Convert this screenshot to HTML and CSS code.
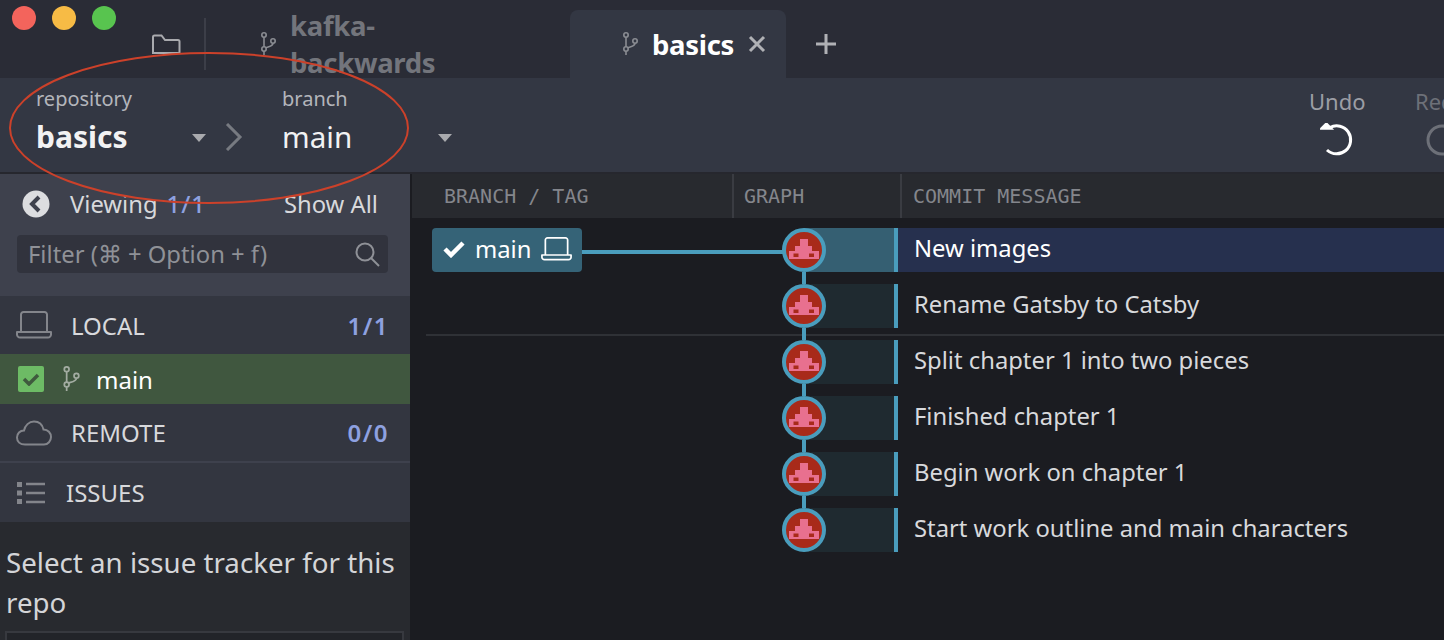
FILE: index.html
```html
<!DOCTYPE html>
<html lang="en">
<head>
  <meta charset="UTF-8">
  <meta name="viewport" content="width=device-width, initial-scale=1.0">
  <title>basics</title>
  <link rel="stylesheet" href="styles.css">
</head>
<body>
  <svg width="0" height="0" class="defs">
    <symbol id="fork" viewBox="0 0 16 24">
      <g fill="none" stroke="currentColor" stroke-width="1.6">
        <circle cx="4" cy="3" r="2.2"/>
        <circle cx="4" cy="17" r="2.2"/>
        <circle cx="13" cy="9" r="2.2"/>
        <path d="M4 5.2v9.6M4 19.2v3.8M13 11.2c0 3-5 3.6-7.6 4.6"/>
      </g>
    </symbol>
    <symbol id="laptop" viewBox="0 0 36 28">
      <g fill="none" stroke="currentColor" stroke-width="2" stroke-linejoin="round">
        <path d="M5 21V3.5A2.5 2.5 0 0 1 7.500 1h21A2.500 2.500 0 0 1 31 3.500V21"/>
        <path d="M1 21h34v2.500a3 3 0 0 1-3 3H4a3 3 0 0 1-3-3z"/>
      </g>
    </symbol>
    <symbol id="face" viewBox="0 0 44 44">
      <circle cx="22" cy="22" r="20" fill="#a82a1a" stroke="#4a9dbd" stroke-width="4"/>
      <path fill="#e8708f" d="M18 11h8v7h4v5h7v8H7v-8h6v-5h5z"/>
      <path fill="#a82a1a" d="M11.500 25.500h5v3.500h-5zM27 25.500h5v3.500h-5z"/>
    </symbol>
  </svg>

  <div class="app">
    <header class="tabbar">
      <div class="lights">
        <span class="light red"></span>
        <span class="light yellow"></span>
        <span class="light green"></span>
      </div>
      <svg class="folder" width="30" height="24" viewBox="0 0 30 24">
        <path d="M2 21V5a1.500 1.500 0 0 1 1.500-1.500h7L14 8h13a1.500 1.500 0 0 1 1.500 1.500V21z" fill="none" stroke="currentColor" stroke-width="2"/>
      </svg>
      <div class="tabsep"></div>
      <div class="tab">
        <svg class="tab-fork" width="16" height="24"><use href="#fork"/></svg>
        <span class="tab-name">kafka-backwards</span>
      </div>
      <div class="tab active">
        <svg class="tab-fork" width="16" height="24"><use href="#fork"/></svg>
        <span class="tab-name">basics</span>
        <svg class="tab-close" width="18" height="18" viewBox="0 0 18 18">
          <path d="M2 2l14 14M16 2L2 16" stroke="currentColor" stroke-width="3"/>
        </svg>
      </div>
      <svg class="tab-add" width="20" height="20" viewBox="0 0 20 20">
        <path d="M10 0v20M0 10h20" stroke="currentColor" stroke-width="3"/>
      </svg>
    </header>

    <div class="toolbar">
      <div class="picker repo">
        <span class="picker-label">repository</span>
        <span class="picker-value bold">basics</span>
        <span class="caret"></span>
      </div>
      <svg class="crumb" width="18" height="28" viewBox="0 0 18 28">
        <path d="M2 1l13 13L2 27" fill="none" stroke="currentColor" stroke-width="3"/>
      </svg>
      <div class="picker branch">
        <span class="picker-label">branch</span>
        <span class="picker-value">main</span>
        <span class="caret"></span>
      </div>
      <div class="tool undo">
        <span class="tool-label">Undo</span>
        <svg width="34" height="34" viewBox="0 0 34 34">
          <path d="M10 4.500A14 14 0 1 1 7 27" fill="none" stroke="#fff" stroke-width="3"/>
          <path d="M1 1.500l11 0 0 11z" fill="#fff" transform="rotate(-45 6 7)"/>
        </svg>
      </div>
      <div class="tool redo">
        <span class="tool-label">Redo</span>
        <svg width="34" height="34" viewBox="0 0 34 34">
          <circle cx="17" cy="17" r="14" fill="none" stroke="currentColor" stroke-width="3"/>
        </svg>
      </div>
    </div>

    <div class="body">
      <aside class="sidebar">
        <div class="side-top">
          <div class="viewing">
            <svg class="back" width="28" height="28" viewBox="0 0 28 28">
              <circle cx="14" cy="14" r="13.500" fill="#dcdde0"/>
              <path d="M17 7l-7 7 7 7" fill="none" stroke="#3e414d" stroke-width="4"/>
            </svg>
            <span class="viewing-label">Viewing</span>
            <span class="count">1/1</span>
            <span class="show-all">Show All</span>
          </div>
          <div class="filter">
            <span class="filter-text">Filter (⌘ + Option + f)</span>
            <svg width="26" height="26" viewBox="0 0 26 26">
              <circle cx="11" cy="11" r="8.500" fill="none" stroke="currentColor" stroke-width="2"/>
              <path d="M17 17l8 8" stroke="currentColor" stroke-width="2"/>
            </svg>
          </div>
        </div>

        <div class="section local">
          <svg class="section-icon" width="36" height="28"><use href="#laptop"/></svg>
          <span class="section-name">LOCAL</span>
          <span class="count">1/1</span>
        </div>
        <div class="branch-row">
          <span class="check">
            <svg width="18" height="14" viewBox="0 0 18 14">
              <path d="M2 7l5 5 9-9" fill="none" stroke="#3f5a3e" stroke-width="3.500"/>
            </svg>
          </span>
          <svg class="branch-fork" width="20" height="26"><use href="#fork"/></svg>
          <span>main</span>
        </div>
        <div class="section remote">
          <svg class="section-icon" width="36" height="26" viewBox="0 0 36 26">
            <path d="M9 24.500C4 24.500 1 21.500 1 17.500s3-7 7-7c1-5 5-9 10-9 5.500 0 8.500 3.500 9.500 8 4.500 0 7.500 3.500 7.500 7.500s-3 7.500-7 7.500z" fill="none" stroke="currentColor" stroke-width="2"/>
          </svg>
          <span class="section-name">REMOTE</span>
          <span class="count">0/0</span>
        </div>
        <div class="section issues">
          <svg class="section-icon" width="30" height="24" viewBox="0 0 30 24">
            <path d="M1 1h5v5H1zM1 9.500h5v5H1zM1 18h5v5H1z" fill="currentColor"/>
            <path d="M10 3h19M10 12h19M10 21h19" stroke="currentColor" stroke-width="2.500"/>
          </svg>
          <span class="section-name">ISSUES</span>
        </div>
        <div class="tracker">
          <p>Select an issue tracker for this repo</p>
          <div class="tracker-box"></div>
        </div>
      </aside>

      <main class="history">
        <div class="columns">
          <div class="col col-branch">BRANCH / TAG</div>
          <div class="col col-graph">GRAPH</div>
          <div class="col col-msg">COMMIT MESSAGE</div>
        </div>
        <div class="commits">
          <div class="commit selected">
            <div class="refs">
              <div class="ref">
                <svg width="22" height="18" viewBox="0 0 22 18">
                  <path d="M2 9l6 6L20 3" fill="none" stroke="#fff" stroke-width="4.500"/>
                </svg>
                <span>main</span>
                <svg width="31" height="24"><use href="#laptop"/></svg>
              </div>
              <div class="wire"></div>
            </div>
            <div class="graph"><svg class="node" width="44" height="44"><use href="#face"/></svg><div class="tint"></div></div>
            <div class="msg">New images</div>
          </div>
          <div class="commit">
            <div class="refs"></div>
            <div class="graph"><svg class="node" width="44" height="44"><use href="#face"/></svg><div class="tint"></div></div>
            <div class="msg">Rename Gatsby to Catsby</div>
          </div>
          <div class="rule"></div>
          <div class="commit">
            <div class="refs"></div>
            <div class="graph"><svg class="node" width="44" height="44"><use href="#face"/></svg><div class="tint"></div></div>
            <div class="msg">Split chapter 1 into two pieces</div>
          </div>
          <div class="commit">
            <div class="refs"></div>
            <div class="graph"><svg class="node" width="44" height="44"><use href="#face"/></svg><div class="tint"></div></div>
            <div class="msg">Finished chapter 1</div>
          </div>
          <div class="commit">
            <div class="refs"></div>
            <div class="graph"><svg class="node" width="44" height="44"><use href="#face"/></svg><div class="tint"></div></div>
            <div class="msg">Begin work on chapter 1</div>
          </div>
          <div class="commit last">
            <div class="refs"></div>
            <div class="graph"><svg class="node" width="44" height="44"><use href="#face"/></svg><div class="tint"></div></div>
            <div class="msg">Start work outline and main characters</div>
          </div>
        </div>
      </main>
    </div>

    <svg class="ring" width="420" height="160" viewBox="0 0 420 160">
      <ellipse cx="209" cy="77" rx="199" ry="75" fill="none" stroke="#cc412a" stroke-width="2"/>
    </svg>
  </div>
</body>
</html>
```

FILE: styles.css
```css
* {
  box-sizing: border-box;
}
html, body {
  margin: 0;
  height: 100%;
  overflow: hidden;
}
body {
  font-family: "Noto Sans", sans-serif;
  background-color: #1b1c21;
  color: #d8d9dc;
}
.defs {
  position: absolute;
}
.app {
  position: relative;
  display: flex;
  flex-direction: column;
  height: 640px;
  overflow: hidden;
}
.ring {
  position: absolute;
  left: 0;
  top: 51px;
  pointer-events: none;
}

/* title bar and tabs */
.tabbar {
  position: relative;
  display: flex;
  align-items: flex-end;
  height: 78px;
  flex-shrink: 0;
  background-color: #2a2c36;
}
.lights {
  position: absolute;
  left: 12px;
  top: 6px;
  display: flex;
  gap: 16px;
}
.light {
  width: 24px;
  height: 24px;
  border-radius: 50%;
}
.red { background-color: #f3645c; }
.yellow { background-color: #f7bb45; }
.green { background-color: #58c44f; }
.folder {
  margin: 0 0 22px 151px;
  color: #a9aaae;
}
.tabsep {
  width: 2px;
  height: 52px;
  margin: 0 0 8px 23px;
  background-color: #3c3e48;
}
.tab {
  display: flex;
  align-items: center;
  width: 314px;
  height: 68px;
  padding: 0 0 0 54px;
  color: #73757c;
  font-size: 27.5px;
  font-weight: 700;
}
.tab .tab-name {
  margin-left: 14px;
  letter-spacing: -0.3px;
}
.tab-fork {
  color: #8b8d93;
}
.tab.active {
  width: 216px;
  margin-left: 50px;
  padding-left: 52px;
  background-color: #333743;
  border-radius: 8px 8px 0 0;
  color: #fff;
}
.tab-close {
  margin-left: 14px;
  color: #b0b1b5;
}
.tab-add {
  margin: 0 0 24px 30px;
  color: #b0b1b5;
}

/* toolbar */
.toolbar {
  display: flex;
  height: 96px;
  flex-shrink: 0;
  background-color: #333743;
  border-bottom: 2px solid #26272e;
  position: relative;
}
.picker {
  position: relative;
  display: flex;
  flex-direction: column;
  padding-top: 8px;
}
.picker.repo {
  width: 206px;
  margin-left: 36px;
}
.picker.branch {
  width: 172px;
  margin-left: 39px;
}
.picker-label {
  font-size: 20px;
  line-height: 26px;
  color: #b3b5bb;
}
.picker-value {
  font-size: 29.6px;
  line-height: 50px;
  color: #f2f2f3;
}
.bold {
  font-size: 30px;
  font-weight: 700;
}
.caret {
  position: absolute;
  right: 2px;
  top: 56px;
  width: 0;
  height: 0;
  border-left: 7px solid transparent;
  border-right: 7px solid transparent;
  border-top: 8px solid #a9aaae;
}
.picker.repo .caret {
  right: 36px;
}
.crumb {
  margin: 45px 0 0 -17px;
  color: #777a81;
}
.tool {
  display: flex;
  flex-direction: column;
  align-items: center;
  position: absolute;
  top: 8px;
  color: #9c9ea5;
  font-size: 22px;
}
.tool-label {
  line-height: 30px;
}
.tool svg {
  margin-top: 7px;
}
.undo {
  left: 1309px;
}
.redo {
  left: 1415px;
  color: #6d7078;
}
.redo svg {
  align-self: flex-start;
  margin-left: 10px;
}

/* sidebar */
.body {
  flex: 1;
  display: flex;
  min-height: 0;
}
.sidebar {
  display: flex;
  flex-direction: column;
  width: 412px;
  flex-shrink: 0;
  background-color: #282a2f;
  border-right: 2px solid #1b1c21;
}
.side-top {
  flex-shrink: 0;
  height: 122px;
  padding: 14px 22px 0 17px;
  background-color: #3e414d;
  font-size: 23.8px;
}
.viewing {
  display: flex;
  align-items: center;
  height: 32px;
  padding-left: 5px;
  color: #d8d9dc;
}
.viewing-label {
  margin-left: 20px;
}
.viewing .count {
  margin-left: 9px;
}
.show-all {
  margin-left: auto;
  padding-right: 10px;
}
.count {
  color: #8ea1e0;
  font-weight: 500;
  letter-spacing: 1px;
}
.filter {
  display: flex;
  align-items: center;
  justify-content: space-between;
  height: 38px;
  margin-top: 15px;
  padding: 0 8px 0 11px;
  border-radius: 4px;
  background-color: #31333d;
  color: #8f9197;
}
.section {
  display: flex;
  align-items: center;
  flex-shrink: 0;
  height: 58px;
  padding: 0 21px 0 16px;
  background-color: #333640;
  font-size: 24px;
}
.section-icon {
  color: #83858b;
}
.section-name {
  margin-left: 19px;
  flex: 1;
}
.section .count {
  font-size: 24px;
  font-weight: 600;
  letter-spacing: 1.5px;
}
.branch-row {
  display: flex;
  align-items: center;
  flex-shrink: 0;
  height: 50px;
  padding-left: 18px;
  background-color: #40573f;
  color: #fff;
  font-size: 24px;
}
.check {
  display: flex;
  align-items: center;
  justify-content: center;
  width: 26px;
  height: 26px;
  border-radius: 2px;
  background-color: #6dbb65;
}
.branch-fork {
  margin: 0 15px 0 17px;
  color: #a3aca2;
}
.remote {
  border-bottom: 2px solid #3e414d;
  height: 59px;
}
.issues {
  height: 59px;
}
.issues .section-name {
  margin-left: 20px;
}
.tracker {
  flex: 1;
  min-height: 0;
  padding: 20px 6px 0;
  font-size: 27.7px;
  line-height: 40px;
  color: #d4d5d8;
}
.tracker p {
  margin: 0;
}
.tracker-box {
  height: 20px;
  margin: 9px 0 0 -1px;
  border: 2px solid #37393f;
  border-bottom: 0;
  background-color: #222429;
}

/* commit graph */
.history {
  flex: 1;
  min-width: 0;
}
.columns {
  display: flex;
  height: 44px;
  background-color: #282a2f;
  font-family: "DejaVu Sans Mono", monospace;
  font-size: 20px;
  color: #84868c;
}
.col {
  display: flex;
  align-items: center;
}
.col-branch {
  width: 322px;
  padding-left: 32px;
  border-right: 2px solid #3a3c42;
}
.col-graph {
  width: 168px;
  padding-left: 10px;
  border-right: 2px solid #3a3c42;
}
.col-msg {
  padding-left: 11px;
}
.commits {
  padding-top: 10px;
}
.commit {
  display: flex;
  height: 44px;
  margin-bottom: 12px;
  font-size: 23.8px;
}
.refs {
  display: flex;
  align-items: center;
  width: 370px;
  padding-left: 20px;
}
.ref {
  display: flex;
  align-items: center;
  gap: 10px;
  width: 150px;
  height: 44px;
  padding: 0 0 3px 11px;
  border-radius: 4px;
  background-color: #356377;
  color: #fff;
  flex-shrink: 0;
}
.wire {
  flex: 1;
  height: 4px;
  margin: 4px -4px 0 0;
  background-color: #4a9dbd;
}
.graph {
  position: relative;
  display: flex;
  width: 112px;
}
.graph::after {
  content: "";
  position: absolute;
  left: 20px;
  top: 44px;
  width: 4px;
  height: 12px;
  background-color: #4a9dbd;
}
.last .graph::after {
  display: none;
}
.node {
  position: relative;
  z-index: 1;
  flex-shrink: 0;
}
.tint {
  flex: 1;
  margin-left: -22px;
  background-color: #1f2a30;
}
.selected .tint {
  background-color: #355f72;
}
.msg {
  flex: 1;
  display: flex;
  align-items: center;
  padding: 0 0 4px 16px;
  border-left: 4px solid #4a9dbd;
  color: #d8d9dc;
}
.selected .msg {
  background-color: #26304e;
  color: #fff;
}
.rule {
  height: 2px;
  margin: -6px 0 4px 14px;
  background-color: #2f3136;
}
```
